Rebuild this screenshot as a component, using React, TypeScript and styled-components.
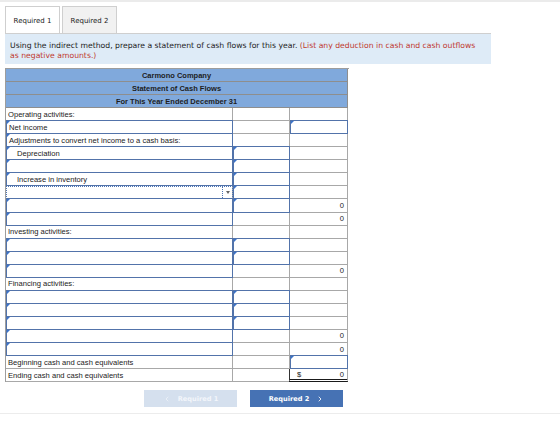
import styled, { createGlobalStyle, css } from "styled-components";
import { ChevronLeft, ChevronRight } from "lucide-react";

const GlobalStyle = createGlobalStyle`
  html, body {
    margin: 0;
    padding: 0;
    background: #fff;
  }
  body {
    width: 560px;
    height: 421px;
    overflow: hidden;
    font-family: "Liberation Sans", Arial, sans-serif;
  }
`;

type Kind = "plain" | "input" | "zero" | "dollar";

type Line = {
  label?: string;
  lead: "text" | "input" | "select";
  indent?: boolean;
  mid: Kind;
  last: Kind;
};

// rows of the statement, top to bottom
const rows: Line[] = [
  { label: "Operating activities:", lead: "text", mid: "plain", last: "plain" },
  { label: "Net income", lead: "input", mid: "plain", last: "input" },
  { label: "Adjustments to convert net income to a cash basis:", lead: "input", mid: "plain", last: "plain" },
  { label: "Depreciation", lead: "input", indent: true, mid: "input", last: "plain" },
  { lead: "input", mid: "input", last: "plain" },
  { label: "Increase in inventory", lead: "input", indent: true, mid: "input", last: "plain" },
  { lead: "select", mid: "input", last: "plain" },
  { lead: "input", mid: "input", last: "zero" },
  { lead: "input", mid: "plain", last: "zero" },
  { label: "Investing activities:", lead: "text", mid: "plain", last: "plain" },
  { lead: "input", mid: "input", last: "plain" },
  { lead: "input", mid: "input", last: "plain" },
  { lead: "input", mid: "plain", last: "zero" },
  { label: "Financing activities:", lead: "text", mid: "plain", last: "plain" },
  { lead: "input", mid: "input", last: "plain" },
  { lead: "input", mid: "input", last: "plain" },
  { lead: "input", mid: "input", last: "plain" },
  { lead: "input", mid: "plain", last: "zero" },
  { lead: "input", mid: "plain", last: "zero" },
  { label: "Beginning cash and cash equivalents", lead: "text", mid: "plain", last: "input" },
  { label: "Ending cash and cash equivalents", lead: "text", mid: "plain", last: "dollar" },
];

const titles = ["Carmono Company", "Statement of Cash Flows", "For This Year Ended December 31"];

const AmountCell = ({ kind }: { kind: Kind }) => {
  if (kind === "input") {
    return (
      <Cell>
        <Field />
      </Cell>
    );
  }
  if (kind === "zero") {
    return (
      <Cell $align="right">
        <Value>0</Value>
      </Cell>
    );
  }
  if (kind === "dollar") {
    return (
      <Cell $total>
        <Dollar>$</Dollar>
        <Value>0</Value>
      </Cell>
    );
  }
  return <Cell />;
};

export default function App() {
  return (
    <>
      <GlobalStyle />
      <TopBar />
      <Page>
        <Tabs>
          <Tab $active>Required 1</Tab>
          <Tab>Required 2</Tab>
        </Tabs>
        <Instructions>
          Using the indirect method, prepare a statement of cash flows for this year.{" "}
          <Hint>(List any deduction in cash and cash outflows as negative amounts.)</Hint>
        </Instructions>
        <Sheet>
          {titles.map((t) => (
            <HeadCell key={t}>{t}</HeadCell>
          ))}
          {rows.map((r, i) => (
            <Row key={i}>
              {r.lead === "text" && (
                <Cell>
                  <Label>{r.label}</Label>
                </Cell>
              )}
              {r.lead === "input" && (
                <Cell>
                  <Field>
                    <Label $indent={r.indent}>{r.label}</Label>
                  </Field>
                </Cell>
              )}
              {r.lead === "select" && (
                <Cell>
                  <Select>
                    <Arrow />
                  </Select>
                </Cell>
              )}
              <AmountCell kind={r.mid} />
              <AmountCell kind={r.last} />
            </Row>
          ))}
        </Sheet>
        <Footer>
          <NavButton $disabled>
            <ChevronLeft size={8} strokeWidth={2} />
            Required 1
          </NavButton>
          <NavButton>
            Required 2
            <ChevronRight size={8} strokeWidth={2.5} />
          </NavButton>
        </Footer>
      </Page>
      <BottomRule />
    </>
  );
}

const TopBar = styled.div`
  height: 2px;
  background: #ebebeb;
`;

const Page = styled.div`
  padding: 4px 5px 0;
  width: 477px;
`;

const Tabs = styled.div`
  display: flex;
  gap: 2px;
  height: 27px;
`;

const Tab = styled.div<{ $active?: boolean }>`
  width: 55px;
  box-sizing: border-box;
  display: flex;
  align-items: center;
  justify-content: center;
  font-family: "DejaVu Sans", Verdana, sans-serif;
  font-size: 7px;
  color: #222;
  border: 1px solid #cfcfcf;
  border-bottom: none;
  background: ${(p) => (p.$active ? "#fff" : "#f1f1f1")};
  padding-top: 1px;
`;

const Instructions = styled.div`
  width: 486px;
  box-sizing: border-box;
  background: #deebf7;
  border-top: 1px solid #cfcfcf;
  padding: 7px 5px 4px;
  font-family: "DejaVu Sans", Verdana, sans-serif;
  font-size: 7.7px;
  line-height: 9.5px;
  color: #222;
`;

const Hint = styled.span`
  color: #c0392f;
`;

const Sheet = styled.div`
  margin-top: 4px;
  display: grid;
  grid-template-columns: 227px 57px 58px;
  grid-auto-rows: 13.05px;
  width: 343px;
  border-left: 1px solid #9d9d9d;
  border-top: 1px solid #9d9d9d;
`;

const HeadCell = styled.div`
  grid-column: 1 / -1;
  background: #80a9dc;
  border-right: 1px solid #8e8e8e;
  border-bottom: 1px solid #8e8e8e;
  display: flex;
  align-items: center;
  justify-content: center;
  font-size: 7.5px;
  font-weight: bold;
  color: #1d1d1d;
`;

const Row = styled.div`
  display: contents;
`;

const Cell = styled.div<{ $align?: "right"; $total?: boolean }>`
  box-sizing: border-box;
  display: flex;
  align-items: center;
  justify-content: ${(p) => (p.$align === "right" ? "flex-end" : "flex-start")};
  border-right: 1px solid #a8a8a8;
  border-bottom: 1px solid #a8a8a8;
  min-width: 0;
  ${(p) =>
    p.$total &&
    css`
      justify-content: space-between;
      border-bottom: 3px double #1a1a1a;
      border-left: 1px solid #333;
      margin-left: -1px;
    `}
`;

const Field = styled.div`
  position: relative;
  align-self: stretch;
  flex: 1;
  box-sizing: border-box;
  margin: -1px -1px -1px 0;
  border: 1.5px solid #5273aa;
  display: flex;
  align-items: center;
  background: #fff;

  &::before {
    content: "";
    position: absolute;
    left: 0;
    top: 0;
    border-top: 3px solid #3b73c9;
    border-right: 3px solid transparent;
  }
`;

const Select = styled.div`
  align-self: stretch;
  flex: 1;
  box-sizing: border-box;
  margin: 0 -1px -1px 0;
  border: 1px dotted #4d74b3;
  display: flex;
  justify-content: flex-end;
`;

const Arrow = styled.div`
  width: 9px;
  border-left: 1px dotted #4d74b3;
  display: flex;
  align-items: center;
  justify-content: center;

  &::after {
    content: "";
    border-top: 3px solid #666;
    border-left: 2.5px solid transparent;
    border-right: 2.5px solid transparent;
  }
`;

const Label = styled.span<{ $indent?: boolean }>`
  font-size: 7.6px;
  color: #222;
  white-space: nowrap;
  padding-left: ${(p) => (p.$indent ? "10px" : "2px")};
`;

const Value = styled.span`
  font-size: 7.6px;
  color: #222;
  padding-right: 3px;
`;

const Dollar = styled.span`
  font-size: 7.6px;
  color: #222;
  padding-left: 7px;
`;

const Footer = styled.div`
  display: flex;
  justify-content: center;
  gap: 13px;
  margin-top: 8px;
  padding-bottom: 6px;
`;

const NavButton = styled.div<{ $disabled?: boolean }>`
  width: 93px;
  height: 17px;
  display: flex;
  align-items: center;
  justify-content: center;
  gap: 7px;
  font-family: "DejaVu Sans", Verdana, sans-serif;
  font-size: 6.6px;
  font-weight: bold;
  color: ${(p) => (p.$disabled ? "#f3f6fb" : "#fff")};
  background: ${(p) => (p.$disabled ? "#d5e0ee" : "#4672b4")};
`;

const BottomRule = styled.div`
  height: 1px;
  background: #ececec;
`;
